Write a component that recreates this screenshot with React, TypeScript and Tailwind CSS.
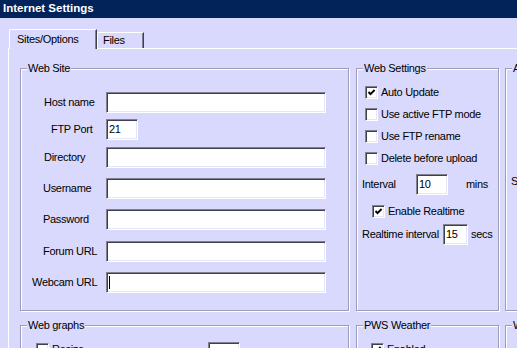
import React from "react";

const BG = "bg-[#d9d9fd]";

function Input({ w, value, caret }: { w: string; value?: string; caret?: boolean }) {
  return (
    <div
      className={`${w} h-[21px] shrink-0 bg-white border border-t-[#80808f] border-l-[#80808f] border-b-white border-r-white shadow-[inset_1px_1px_0_#404048,inset_-1px_-1px_0_#e6e6f6] flex items-center pl-[2px] leading-[13px]`}
    >
      {value}
      {caret && <span className="inline-block w-[1px] h-[13px] bg-black" />}
    </div>
  );
}

function Check({ checked }: { checked?: boolean }) {
  return (
    <div className="w-[13px] h-[13px] shrink-0 bg-white border border-t-[#80808f] border-l-[#80808f] border-b-white border-r-white shadow-[inset_1px_1px_0_#404048,inset_-1px_-1px_0_#e6e6f6] flex items-center justify-center">
      {checked && (
        <svg width="9" height="9" viewBox="0 0 9 9">
          <path d="M1.5 4 L3.5 6.2 L7.6 2" fill="none" stroke="#000" strokeWidth="1.9" />
        </svg>
      )}
    </div>
  );
}

function Group({
  label,
  className,
  children,
}: {
  label: string;
  className: string;
  children?: React.ReactNode;
}) {
  return (
    <div
      className={`relative shrink-0 border border-[#9c9cb4] shadow-[1px_1px_0_#ffffff,inset_1px_1px_0_#ffffff] ${className}`}
    >
      <span className={`absolute left-[6px] -top-[7px] ${BG} px-[1px] leading-[13px] whitespace-nowrap`}>
        {label}
      </span>
      {children}
    </div>
  );
}

function Row({ pl, label, mt, children }: { pl: string; label: string; mt: string; children: React.ReactNode }) {
  return (
    <div className={`flex items-center h-[21px] ${mt}`}>
      <div className="w-[85px] shrink-0">
        <span className={`${pl} leading-[13px] whitespace-nowrap`}>{label}</span>
      </div>
      {children}
    </div>
  );
}

function CheckRow({ checked, label, className }: { checked?: boolean; label: string; className?: string }) {
  return (
    <div className={`flex items-center h-[13px] gap-[3px] ${className ?? ""}`}>
      <Check checked={checked} />
      <span className="leading-[13px] whitespace-nowrap">{label}</span>
    </div>
  );
}

export default function App() {
  return (
    <div
      className={`w-[517px] h-[348px] overflow-hidden ${BG} text-black text-[11px] tracking-[-0.3px] font-['Liberation_Sans',Arial,sans-serif]`}
    >
      <div className="h-[18px] bg-[#02235a] text-white font-bold text-[11.5px] tracking-normal pl-[3px] flex items-center">
        Internet Settings
      </div>

      <div className="flex items-end pl-[9px] mt-[11px] h-[19px]">
        <div className={`relative z-10 -mb-[1px] h-[20px] w-[88px] ${BG} border-l border-t border-white rounded-tl-[2px] border-r border-r-[#404048] shadow-[inset_-1px_0_0_#80808f] flex items-center pl-[7px] pb-[1px]`}>
          Sites/Options
        </div>
        <div className="h-[16px] w-[47px] border-l border-t border-white rounded-tl-[2px] border-r border-r-[#404048] shadow-[inset_-1px_0_0_#80808f] flex items-center pl-[5px]">
          Files
        </div>
      </div>

      <div className="border-t border-l border-white ml-[8px] pl-[11px] pt-[19px] w-[700px]">
        <div className="flex">
          <Group label="Web Site" className="w-[329px] h-[243px]">
            <div className="flex flex-col pt-[23px]">
              <Row pl="pl-[23px]" label="Host name" mt="">
                <Input w="w-[220px]" />
              </Row>
              <Row pl="pl-[30px]" label="FTP Port" mt="mt-[6px]">
                <Input w="w-[32px]" value="21" />
              </Row>
              <Row pl="pl-[23px]" label="Directory" mt="mt-[7px]">
                <Input w="w-[220px]" />
              </Row>
              <Row pl="pl-[22px]" label="Username" mt="mt-[10px]">
                <Input w="w-[220px]" />
              </Row>
              <Row pl="pl-[22px]" label="Password" mt="mt-[10px]">
                <Input w="w-[220px]" />
              </Row>
              <Row pl="pl-[22px]" label="Forum URL" mt="mt-[11px]">
                <Input w="w-[220px]" />
              </Row>
              <Row pl="pl-[11px]" label="Webcam URL" mt="mt-[10px]">
                <Input w="w-[220px]" caret />
              </Row>
            </div>
          </Group>

          <Group label="Web Settings" className="ml-[7px] w-[143px] h-[243px]">
            <div className="flex flex-col pt-[17px]">
              <div className="flex flex-col gap-[9px] pl-[8px]">
                <CheckRow checked label="Auto Update" />
                <CheckRow label="Use active FTP mode" />
                <CheckRow label="Use FTP rename" />
                <CheckRow label="Delete before upload" />
              </div>
              <div className="flex items-center mt-[9px] pl-[5px] h-[21px]">
                <span className="w-[54px] shrink-0 leading-[13px]">Interval</span>
                <Input w="w-[32px]" value="10" />
                <span className="ml-[18px] leading-[13px]">mins</span>
              </div>
              <CheckRow checked label="Enable Realtime" className="mt-[10px] pl-[15px]" />
              <div className="flex items-center mt-[6px] pl-[5px] h-[21px]">
                <span className="w-[81px] shrink-0 leading-[13px] whitespace-nowrap">Realtime interval</span>
                <Input w="w-[25px]" value="15" />
                <span className="ml-[3px] leading-[13px]">secs</span>
              </div>
            </div>
          </Group>

          <Group label="APRS" className="ml-[6px] w-[200px] h-[243px]">
            <div className="pl-[5px] pt-[106px] leading-[13px]">Server</div>
          </Group>
        </div>

        <div className="flex mt-[14px]">
          <Group label="Web graphs" className="w-[329px] h-[120px]">
            <div className="flex items-start pt-[16px] pl-[15px]">
              <div className="pt-[1px] w-[172px] shrink-0">
                <CheckRow label="Resize" />
              </div>
              <Input w="w-[32px]" value="300" />
            </div>
          </Group>
          <Group label="PWS Weather" className="ml-[7px] w-[143px] h-[120px]">
            <div className="pt-[17px] pl-[14px]">
              <CheckRow checked label="Enabled" />
            </div>
          </Group>
          <Group label="WOW" className="ml-[6px] w-[200px] h-[120px]" />
        </div>
      </div>
    </div>
  );
}
